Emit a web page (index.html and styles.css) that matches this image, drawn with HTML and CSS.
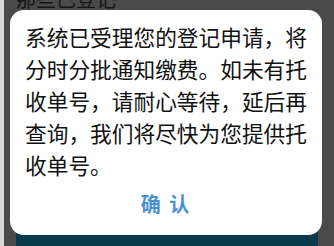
FILE: index.html
```html
<!DOCTYPE html>
<html lang="zh">
<head>
<meta charset="utf-8">
<link rel="stylesheet" href="styles.css">
</head>
<body>
<div class="page">
  <div class="edge"></div>
  <div class="page-title">那些已登记</div>
  <div class="footer-bar"></div>
</div>
<div class="mask">
  <div class="dialog">
    <div class="msg">系统已受理您的登记申请，将分时分批通知缴费。如未有托收单号，请耐心等待，延后再查询，我们将尽快为您提供托收单号。</div>
    <div class="actions"><span class="confirm">确 认</span></div>
  </div>
</div>
</body>
</html>
```
FILE: styles.css
```css
html, body {
  margin: 0;
  padding: 0;
  width: 334px;
  height: 246px;
  overflow: hidden;
  background: #4a4a4a;
  font-family: "Noto Sans CJK SC", "Noto Sans", sans-serif;
}
.page {
  position: relative;
  width: 334px;
  height: 246px;
}
.edge {
  position: absolute;
  left: 0;
  top: 0;
  width: 4px;
  height: 246px;
  background: #d8d8d8;
}
.page-title {
  position: absolute;
  left: 16px;
  top: -16px;
  font-size: 20px;
  color: #151515;
}
.footer-bar {
  position: absolute;
  left: 16px;
  right: 16px;
  bottom: 0;
  height: 14px;
  background: #0a3b4c;
}
.mask {
  position: absolute;
  left: 0;
  top: 0;
  width: 334px;
  height: 246px;
}
.dialog {
  position: absolute;
  left: 10px;
  top: 10px;
  width: 312px;
  height: 225px;
  background: #ffffff;
  border-radius: 14px;
  display: flex;
  flex-direction: column;
  box-sizing: border-box;
}
.msg {
  padding: 11px 12px 0 15px;
  font-size: 21.7px;
  line-height: 32px;
  color: #111111;
}
.actions {
  flex: 1;
  display: flex;
  align-items: center;
  justify-content: center;
  padding-bottom: 10px;
}
.confirm {
  font-size: 20px;
  font-weight: bold;
  color: #4a90d4;
  letter-spacing: 2px;
}
```
